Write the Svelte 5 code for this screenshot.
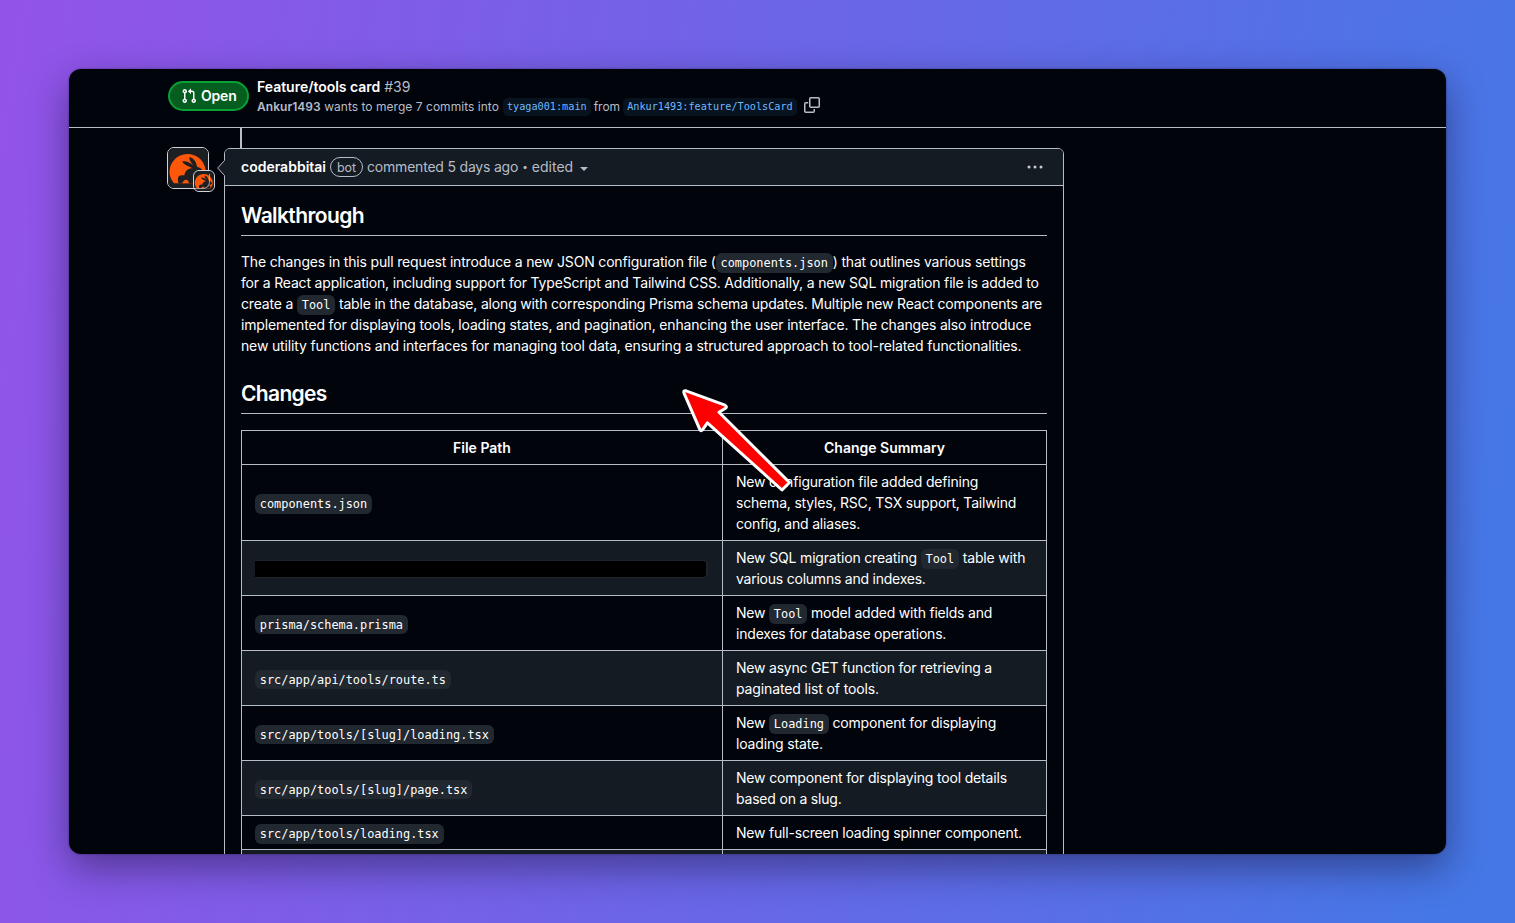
<script>
  // ls: letter-spacing of a line, in px
  const intro = [
    { ls: -0.178, parts: [{ t: 'The changes in this pull request introduce a new JSON configuration file (' }, { c: 'components.json' }, { t: ') that outlines various settings' }] },
    { ls: -0.173, parts: [{ t: 'for a React application, including support for TypeScript and Tailwind CSS. Additionally, a new SQL migration file is added to' }] },
    { ls: -0.18, parts: [{ t: 'create a ' }, { c: 'Tool' }, { t: ' table in the database, along with corresponding Prisma schema updates. Multiple new React components are' }] },
    { ls: -0.167, parts: [{ t: 'implemented for displaying tools, loading states, and pagination, enhancing the user interface. The changes also introduce' }] },
    { ls: -0.148, parts: [{ t: 'new utility functions and interfaces for managing tool data, ensuring a structured approach to tool-related functionalities.' }] }
  ];
  const rows = [
    { path: 'components.json', lines: [
      { ls: -0.19, parts: [{ t: 'New configuration file added defining' }] },
      { ls: -0.19, parts: [{ t: 'schema, styles, RSC, TSX support, Tailwind' }] },
      { ls: -0.19, parts: [{ t: 'config, and aliases.' }] }] },
    { path: null, lines: [
      { ls: -0.17, parts: [{ t: 'New SQL migration creating ' }, { c: 'Tool' }, { t: ' table with' }] },
      { ls: -0.23, parts: [{ t: 'various columns and indexes.' }] }] },
    { path: 'prisma/schema.prisma', lines: [
      { ls: -0.21, parts: [{ t: 'New ' }, { c: 'Tool' }, { t: ' model added with fields and' }] },
      { ls: -0.2, parts: [{ t: 'indexes for database operations.' }] }] },
    { path: 'src/app/api/tools/route.ts', lines: [
      { ls: -0.21, parts: [{ t: 'New async GET function for retrieving a' }] },
      { ls: -0.13, parts: [{ t: 'paginated list of tools.' }] }] },
    { path: 'src/app/tools/[slug]/loading.tsx', lines: [
      { ls: -0.2, parts: [{ t: 'New ' }, { c: 'Loading' }, { t: ' component for displaying' }] },
      { ls: -0.15, parts: [{ t: 'loading state.' }] }] },
    { path: 'src/app/tools/[slug]/page.tsx', lines: [
      { ls: -0.175, parts: [{ t: 'New component for displaying tool details' }] },
      { ls: -0.2, parts: [{ t: 'based on a slug.' }] }] },
    { path: 'src/app/tools/loading.tsx', lines: [
      { ls: -0.2, parts: [{ t: 'New full-screen loading spinner component.' }] }] },
    { path: '', lines: [{ ls: 0, parts: [] }] }
  ];
</script>

{#snippet text(lines)}
  {#each lines as line}
    <div class="line" style="letter-spacing: {line.ls}px">{#each line.parts as part}{#if part.c}<code>{part.c}</code>{:else}<span>{part.t}</span>{/if}{/each}</div>
  {/each}
{/snippet}

{#snippet rabbit()}
  <svg viewBox="0 0 40 40" aria-hidden="true">
    <rect width="40" height="40" fill="#1d2023" />
    <path d="M6 35.2A18 17.600 0 1 1 37 28L33 35.2Z" fill="#ff570a" />
    <path d="M10.5 35.2C9.5 31.5 9.4 28 12.5 27.4C15 27 15.5 27.2 16.3 27.4C17.2 22.3 20.7 20 25 20.3C20 18.3 15.2 16.5 14.4 13.3C18.2 12.8 22.8 14.8 25.6 18C22.7 14.3 20.5 11.2 21.7 9.1C26.6 10.7 28.4 14.7 29 18.8C32.8 19.8 35.1 22.1 36.2 24.7C35 27.3 32.5 28.1 30.4 28.2C32.3 30 33.3 32.5 33.2 35.2Z" fill="#1d2023" />
    <path d="M16 32.5C17.5 31 20.5 31.2 21 35.2H14Z" fill="#ff570a" />
  </svg>
{/snippet}

<main>
  <section class="window">
    <header class="top">
      <div class="state">
        <svg width="16" height="16" viewBox="0 0 16 16" fill="#fff"><path d="M1.5 3.25a2.25 2.25 0 1 1 3 2.122v5.256a2.251 2.251 0 1 1-1.5 0V5.372A2.25 2.25 0 0 1 1.5 3.25Zm5.677-.177L9.573.677A.25.25 0 0 1 10 .854V2.5h1A2.5 2.5 0 0 1 13.5 5v5.628a2.251 2.251 0 1 1-1.5 0V5a1 1 0 0 0-1-1h-1v1.646a.25.25 0 0 1-.427.177L7.177 3.427a.25.25 0 0 1 0-.354ZM3.75 2.5a.75.75 0 1 0 0 1.5.75.75 0 0 0 0-1.5Zm0 9.5a.75.75 0 1 0 0 1.5.75.75 0 0 0 0-1.5Zm8.25.75a.75.75 0 1 0 1.5 0 .75.75 0 0 0-1.5 0Z" /></svg>
        <span>Open</span>
      </div>
      <div class="titles">
        <div class="title"><b>Feature/tools card</b> <span>#39</span></div>
        <div class="sub">
          <span class="who"><b>Ankur1493</b> wants to merge 7 commits into</span>
          <code class="ref">tyaga001:main</code>
          <span class="from">from</span>
          <code class="ref">Ankur1493:feature/ToolsCard</code>
          <svg class="copy" width="16" height="16" viewBox="0 0 16 16" fill="none" stroke="#b7bdc8" stroke-width="1.5"><rect x="5.75" y=".75" width="9.5" height="9.5" rx="1" /><path d="M4.2 5.75H1.75a1 1 0 0 0-1 1v7.5a1 1 0 0 0 1 1h7.5a1 1 0 0 0 1-1V12" /></svg>
        </div>
      </div>
    </header>

    <div class="thread">
      <div class="avatar">
        {@render rabbit()}
        <div class="mini">{@render rabbit()}<i class="ring"></i></div>
      </div>
      <article class="comment">
        <i class="stem"></i>
        <svg class="notch" width="8" height="16" viewBox="0 0 8 16"><path d="M8 0L.7 8L8 16Z" fill="#151b23" /><path d="M7.5 .5L.7 8L7.5 15.5" fill="none" stroke="#b7bdc8" /></svg>
        <div class="meta">
          <b>coderabbitai</b>
          <span class="bot">bot</span>
          <span class="when">commented 5 days ago</span>
          <span class="dot">•</span>
          <span class="edited">edited</span>
          <i class="caret"></i>
          <svg class="kebab" width="16" height="4" viewBox="0 0 16 4" fill="#c5cad3"><circle cx="2" cy="2" r="1.5" /><circle cx="8" cy="2" r="1.5" /><circle cx="14" cy="2" r="1.5" /></svg>
        </div>
        <div class="body">
          <h2>Walkthrough</h2>
          <div class="intro">{@render text(intro)}</div>
          <h2>Changes</h2>
          <table>
            <thead><tr><th class="path">File Path</th><th>Change Summary</th></tr></thead>
            <tbody>
              {#each rows as row}
                <tr>
                  <td>{#if row.path}<code>{row.path}</code>{:else if row.path === null}<div class="redacted"></div>{/if}</td>
                  <td>{@render text(row.lines)}</td>
                </tr>
              {/each}
            </tbody>
          </table>
        </div>
      </article>
    </div>
  </section>
  <svg class="arrow" width="120" height="120" viewBox="0 0 120 120"><path d="M6 11.800L45 26.200Q47.500 27.700 45.500 29.200L39 33.200L109.500 103.500L102 111L27.400 43.800L22.500 50.800Q21 52.600 20 50.800L4 14.200Q3.200 11 6 11.800Z" fill="#f00" stroke="#fff" stroke-width="3" stroke-linejoin="round" /></svg>
</main>

<style>
  :global(body) { margin: 0; }
  main {
    position: relative;
    box-sizing: border-box;
    width: 1515px;
    height: 923px;
    padding: 69px;
    background: linear-gradient(100deg, #9353e9 0%, #4677e6 95%);
    font-family: Inter, "Liberation Sans", sans-serif;
    font-size: 14px;
    line-height: 21px;
    color: #fff;
    overflow: hidden;
  }
  b, h2, th { font-weight: 600; }
  .window {
    width: 1377px;
    height: 785px;
    border-radius: 12px;
    background: #01040b;
    overflow: hidden;
    box-shadow: 0 14px 38px rgba(20, 15, 50, .48), 0 0 2px rgba(0, 0, 0, .5);
  }
  .top {
    display: flex;
    box-sizing: border-box;
    height: 59px;
    padding: 7px 0 0 99px;
    border-bottom: 1px solid #b7bdc8;
  }
  .state {
    display: flex;
    align-items: center;
    box-sizing: border-box;
    width: 81px;
    height: 30px;
    margin-top: 5px;
    padding: 0 0 1px 11px;
    gap: 4px;
    border: 2px solid #09a035;
    border-radius: 15px;
    background: #055d20;
    font-weight: 600;
    letter-spacing: -.2px;
  }
  .titles { margin-left: 8px; color: #b7bdc8; }
  .title b { color: #fff; }
  .title { letter-spacing: -.02px; }
  .sub { display: flex; align-items: center; height: 18px; margin-top: 1px; font-size: 12px; line-height: 18px; white-space: nowrap; }
  .who { letter-spacing: .035px; }
  .ref {
    padding: 0 4px;
    border-radius: 5px;
    background: #07131f;
    color: #71b7ff;
    font-size: 10.2px;
    line-height: 18px;
    margin: 0 0 0 4px;
  }
  .from { margin-left: 3px; }
  .from + .ref { margin-left: 3px; }
  .copy { margin-left: 7px; margin-top: -5px; }
  .thread { display: flex; padding: 20px 0 0 98px; }
  .avatar {
    position: relative;
    box-sizing: border-box;
    width: 42px;
    height: 42px;
    margin-top: -1px;
    border: 1px solid #d0d3d8;
    border-radius: 7px;
  }
  .avatar svg { display: block; width: 100%; height: 100%; border-radius: 6px; }
  .mini {
    position: absolute;
    left: 25px;
    top: 22px;
    width: 20px;
    height: 20px;
    border: 1px solid #d0d3d8;
    border-radius: 6px;
    overflow: hidden;
  }
  .ring {
    position: absolute;
    right: 4px;
    bottom: 2px;
    width: 14px;
    height: 14px;
    border: solid rgba(208, 211, 216, .65);
    border-width: 0 1px 1px 0;
    border-radius: 0 0 7px;
  }
  .comment {
    position: relative;
    box-sizing: border-box;
    width: 840px;
    height: 760px;
    margin-left: 15px;
    border: 1px solid #b7bdc8;
    border-radius: 6px;
  }
  .stem { position: absolute; left: 15px; top: -21px; width: 2px; height: 20px; background: #b7bdc8; }
  .notch { position: absolute; left: -8px; top: 11px; }
  .meta {
    display: flex;
    align-items: center;
    box-sizing: border-box;
    height: 37px;
    padding: 0 20px 1px 16px;
    border-bottom: 1px solid #b7bdc8;
    border-radius: 5px 5px 0 0;
    background: #151b23;
    color: #b7bdc8;
    white-space: nowrap;
  }
  .meta b { color: #fff; }
  .bot { box-sizing: border-box; width: 33px; height: 20px; margin: 1px 4px 0; border: 1px solid #b7bdc8; border-radius: 10px; text-align: center; font-size: 12.500px; line-height: 19px; }
  .when { letter-spacing: -.2px; }
  .dot { margin: 0 4px; font-size: 10px; }
  .caret { margin: 4px 0 0 7px; border: 4px solid transparent; border-top-color: #b7bdc8; border-bottom: 0; }
  .kebab { margin-left: auto; }
  .body { padding: 16px 16px 0; }
  h2 { box-sizing: border-box; height: 34px; margin: 0 0 16px; padding-bottom: 6px; border-bottom: 1px solid #b7bdc8; font-size: 21px; line-height: 28px; letter-spacing: -.6px; }
  .intro { margin: -1px 0 24px; }
  .intro + h2 { letter-spacing: -.67px; }
  .line { white-space: pre; height: 21px; }
  code { font-family: "DejaVu Sans Mono", monospace; letter-spacing: 0; }
  .line code, td code { padding: 2.8px 4.8px; border-radius: 6px; background: #212830; font-size: 11.9px; line-height: 1; }
  table { width: 806px; table-layout: fixed; border-collapse: collapse; }
  .path { width: 454px; }
  th, td { padding: 6px 13px; border: 1px solid #b7bdc8; }
  td { vertical-align: middle; }
  tbody tr:nth-child(even) { background: #151b23; }
  .redacted { width: 451px; height: 16px; margin-top: 2px; background: #000; border-radius: 0 3px 3px 0; box-shadow: 1px 0 0 1px #1c232b; }
  .arrow { position: absolute; left: 680px; top: 379px; }
</style>
